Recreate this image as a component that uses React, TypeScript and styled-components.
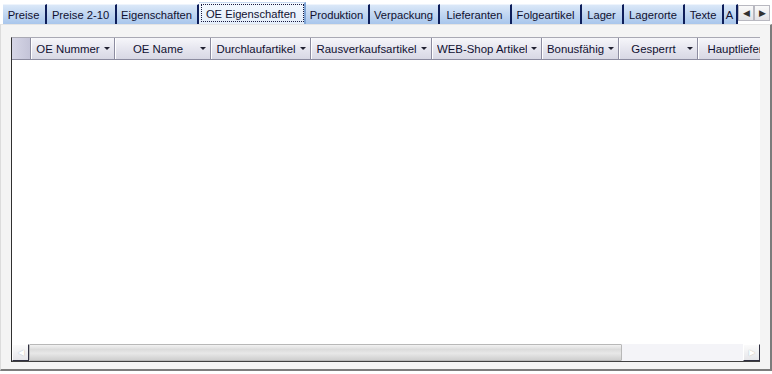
import { createGlobalStyle } from "styled-components";
import styled from "styled-components";

const GlobalStyle = createGlobalStyle`
	body {
		margin: 0;
		background: #ffffff;
		font-family: "Liberation Sans", Arial, sans-serif;
	}
`;

const Window = styled.div`
	width: 772px;
	height: 374px;
	display: flex;
	flex-direction: column;
	background: #ffffff;
	overflow: hidden;
`;

const TabStrip = styled.div`
	display: flex;
	align-items: flex-end;
	height: 24px;
	padding-left: 3px;
	background: #ffffff;
`;

const Tab = styled.div<{ $active?: boolean; $w: number }>`
	box-sizing: border-box;
	width: ${(p) => p.$w}px;
	flex: none;
	height: ${(p) => (p.$active ? 22 : 20)}px;
	display: flex;
	align-items: center;
	justify-content: center;
	padding-right: 1px;
	font-size: 11.2px;
	color: #101030;
	white-space: nowrap;
	overflow: hidden;
	background: ${(p) =>
		p.$active
			? "linear-gradient(#f3f8fe, #e4eefa)"
			: "linear-gradient(#dbe8f8 0%, #c3d8f2 45%, #a9c6ec 100%)"};
	border-right: 2px solid ${(p) => (p.$active ? "#7fa4d4" : "#0e1e5a")};
	border-top: 1px solid ${(p) => (p.$active ? "#c9daf0" : "#eef4fc")};
	outline: ${(p) => (p.$active ? "1px dotted #1a1a40" : "none")};
	outline-offset: -3px;
`;

const ScrollArrows = styled.div`
	display: flex;
	margin-bottom: 3px;
	flex: none;
`;

const ArrowButton = styled.div`
	width: 16px;
	height: 16px;
	box-sizing: border-box;
	border: 1px solid #b8b8c0;
	background: linear-gradient(#fafafa, #e2e2e6);
	display: flex;
	align-items: center;
	justify-content: center;
	color: #303030;
	font-size: 9px;
	line-height: 1;
`;

const Panel = styled.div`
	flex: none;
	height: 347px;
	box-sizing: border-box;
	background: #f4f4f4;
	border-top: 1px solid #e4e4e4;
	border-left: 1px solid #dcdcdc;
	border-right: 2px solid #7c7c7c;
	border-bottom: 2px solid #7c7c7c;
	padding: 12px 10px 7px 10px;
	display: flex;
`;

const Grid = styled.div`
	flex: 1;
	display: flex;
	flex-direction: column;
	background: #ffffff;
	border-top: 1px solid #a9a9b4;
	border-left: 1px solid #303030;
	overflow: hidden;
`;

const HeaderRow = styled.div`
	display: flex;
	height: 21px;
	flex: none;
	border-bottom: 1px solid #8c8ca0;
`;

const Selector = styled.div`
	width: 18px;
	flex: none;
	background: linear-gradient(90deg, #d6d6e6, #c4c4d8);
	border-right: 1px solid #8c8ca0;
`;

const HeaderCell = styled.div<{ $w: number }>`
	box-sizing: border-box;
	width: ${(p) => p.$w}px;
	flex: none;
	display: flex;
	align-items: center;
	padding: 0 4px 0 5px;
	background: linear-gradient(#f6f6fa 0%, #e6e6ef 50%, #d8d8e4 100%);
	border-right: 1px solid #8c8ca0;
	box-shadow: inset 1px 0 0 #ffffff;
	font-size: 11.4px;
	color: #101030;
	white-space: nowrap;
	overflow: hidden;
`;

const Caption = styled.span`
	flex: 1;
	text-align: center;
	overflow: hidden;
`;

const DropArrow = styled.span`
	flex: none;
	width: 0;
	height: 0;
	margin-left: 4px;
	border-left: 3px solid transparent;
	border-right: 3px solid transparent;
	border-top: 3px solid #202030;
`;

const Body = styled.div`
	flex: 1;
	background: #ffffff;
`;

const HScroll = styled.div`
	height: 17px;
	flex: none;
	display: flex;
	background: #f4f4f8;
	border-bottom: 1px solid #404040;
`;

const ScrollBtn = styled.div`
	width: 17px;
	flex: none;
	box-sizing: border-box;
	background: linear-gradient(#fbfbfb, #e6e6ea);
	border: 1px solid #ffffff;
	border-right-color: #303040;
	border-bottom-color: #303040;
	display: flex;
	align-items: center;
	justify-content: center;
	font-size: 8px;
	color: #ffffff;
	text-shadow: 0 0 1px #a0a0a0;
`;

const Thumb = styled.div`
	width: 593px;
	flex: none;
	box-sizing: border-box;
	border: 1px solid #b8b8b8;
	border-radius: 1px;
	background: linear-gradient(#f2f2f2 0%, #dcdcdc 30%, #e8e8e8 55%, #cfcfcf 100%);
`;

const Track = styled.div`
	flex: 1;
`;

const tabs: { label: string; w: number }[] = [
	{ label: "Preise", w: 44 },
	{ label: "Preise 2-10", w: 70 },
	{ label: "Eigenschaften", w: 82 },
	{ label: "OE Eigenschaften", w: 107 },
	{ label: "Produktion", w: 64 },
	{ label: "Verpackung", w: 70 },
	{ label: "Lieferanten", w: 72 },
	{ label: "Folgeartikel", w: 70 },
	{ label: "Lager", w: 42 },
	{ label: "Lagerorte", w: 61 },
	{ label: "Texte", w: 39 },
	{ label: "A", w: 14 },
];

const columns: { label: string; w: number }[] = [
	{ label: "OE Nummer", w: 84 },
	{ label: "OE Name", w: 96 },
	{ label: "Durchlaufartikel", w: 100 },
	{ label: "Rausverkaufsartikel", w: 121 },
	{ label: "WEB-Shop Artikel", w: 110 },
	{ label: "Bonusfähig", w: 77 },
	{ label: "Gesperrt", w: 79 },
	{ label: "Hauptlieferant", w: 100 },
];

export default function App() {
	return (
		<Window>
			<GlobalStyle />
			<TabStrip>
				{tabs.map((t) => (
					<Tab key={t.label} $w={t.w} $active={t.label === "OE Eigenschaften"}>
						{t.label}
					</Tab>
				))}
				<ScrollArrows>
					<ArrowButton>◀</ArrowButton>
					<ArrowButton>▶</ArrowButton>
				</ScrollArrows>
			</TabStrip>
			<Panel>
				<Grid>
					<HeaderRow>
						<Selector />
						{columns.map((c) => (
							<HeaderCell key={c.label} $w={c.w}>
								<Caption>{c.label}</Caption>
								<DropArrow />
							</HeaderCell>
						))}
					</HeaderRow>
					<Body />
					<HScroll>
						<ScrollBtn>◀</ScrollBtn>
						<Thumb />
						<Track />
						<ScrollBtn>▶</ScrollBtn>
					</HScroll>
				</Grid>
			</Panel>
		</Window>
	);
}
